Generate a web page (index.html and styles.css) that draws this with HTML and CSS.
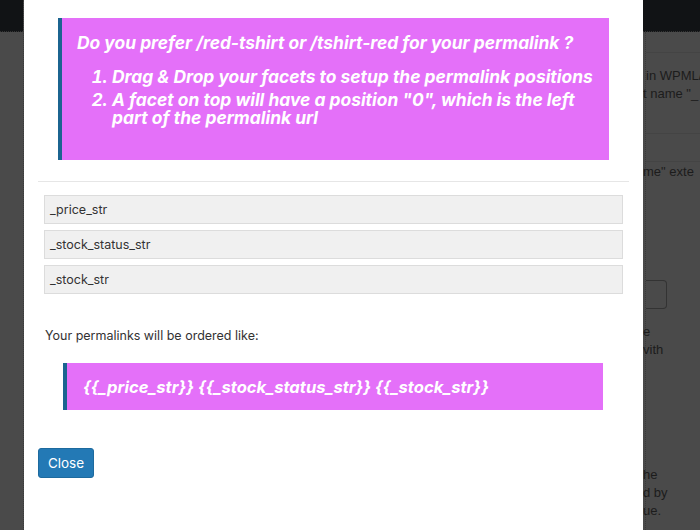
FILE: index.html
```html
<!DOCTYPE html>
<html lang="en">
<head>
  <meta charset="UTF-8" />
  <meta name="viewport" content="width=device-width, initial-scale=1" />
  <title>Permalink order</title>
  <link rel="stylesheet" href="styles.css">
</head>
<body>
<div class="screen">
  <aside class="edge edge-left">
    <div class="adminbar"></div>
  </aside>

  <main class="modal" role="dialog" aria-label="Permalink order">
    <div class="notice notice-help">
      <p class="notice-title">Do you prefer /red-tshirt or /tshirt-red for your permalink ?</p>
      <ol>
        <li>Drag &amp; Drop your facets to setup the permalink positions</li>
        <li>A facet on top will have a position "0", which is the left<br>part of the permalink url</li>
      </ol>
    </div>

    <hr class="sep">

    <div class="modal-body">
      <ul class="facets">
        <li>_price_str</li>
        <li>_stock_status_str</li>
        <li>_stock_str</li>
      </ul>
      <p class="order-label">Your permalinks will be ordered like:</p>
    </div>

    <div class="notice notice-result">{{_price_str}} {{_stock_status_str}} {{_stock_str}}</div>

    <button class="btn-close" type="button">Close</button>
  </main>

  <aside class="edge edge-right">
    <div class="adminbar"></div>
    <div class="page">
      <div class="page-box">
        <span class="clip">in WPML/</span>
        <span class="clip cut">t name "_</span>
      </div>
      <div class="page-row">
        <span class="clip cut">me" exte</span>
      </div>
      <div class="page-input"></div>
      <span class="clip cut line-e">e</span>
      <span class="clip cut">vith</span>
      <span class="clip cut line-he">he</span>
      <span class="clip cut">d by</span>
      <span class="clip cut">ue.</span>
    </div>
  </aside>
</div>
</body>
</html>
```

FILE: styles.css
```css
body {
  margin: 0;
  background: #4a4a4a;
  font-family: Inter, 'Liberation Sans', sans-serif;
  color: #333;
}
.screen {
  display: grid;
  grid-template-columns: 24px 619px 57px;
  width: 700px;
  height: 530px;
  overflow: hidden;
}

/* dimmed page behind the dialog */
.edge {
  background: #4a4a4a;
  overflow: hidden;
}
.edge-left {
  border-right: 1px dotted #3a3a3a;
  box-sizing: border-box;
}
.adminbar {
  height: 31px;
  background: #111315;
  border-bottom: 1px dotted #333;
}
.page {
  display: flex;
  flex-direction: column;
  font-family: 'Liberation Sans', sans-serif;
  font-size: 13px;
  line-height: 18px;
  color: #1c1c1c;
  border-left: 1px dotted #3a3a3a;
  margin-left: 2px;
  height: 100%;
}
.clip {
  white-space: nowrap;
  display: block;
}
.cut {
  margin-left: -3px;
}
.page-box {
  margin-top: 20px;
  height: 82px;
  padding-top: 14px;
  box-sizing: border-box;
  border-top: 1px solid #444;
  border-bottom: 1px solid #444;
}
.page-row {
  margin-top: 27px;
  border-top: 1px solid #444;
  padding-top: 1px;
}
.page-input {
  margin-top: 99px;
  width: 20px;
  height: 27px;
  border: 1px solid #333;
  border-left: none;
  border-radius: 0 4px 4px 0;
}
.line-e {
  margin-top: 14px;
}
.line-he {
  margin-top: 107px;
}

/* dialog */
.modal {
  background: #fff;
  padding: 0 14px;
}
.notice {
  background: #e470f9;
  border-left: 4px solid #1b6490;
  color: #fff;
  font-weight: 700;
  font-style: italic;
}
.notice-help {
  margin: 18px 20px 0;
  padding: 14px 15px 33px;
  font-size: 17.4px;
}
.notice-title {
  margin: 0;
  line-height: 22px;
}
.notice-help ol {
  margin: 14px 0 0;
  padding-left: 35px;
  line-height: 18px;
}
.notice-help li + li {
  margin-top: 5px;
}
.sep {
  margin: 21px 0 0;
  border: none;
  border-top: 1px solid #e6e6e6;
}
.modal-body {
  padding: 0 6px;
  font-size: 12.5px;
}
.facets {
  list-style: none;
  margin: 13px 0 0;
  padding: 0;
  display: flex;
  flex-direction: column;
  gap: 6px;
}
.facets li {
  height: 29px;
  box-sizing: border-box;
  background: #f0f0f0;
  border: 1px solid #dcdcdc;
  padding-left: 5px;
  line-height: 27px;
}
.order-label {
  margin: 33px 0 0 1px;
  line-height: 18px;
}
.notice-result {
  margin: 18px 0 0 25px;
  width: 520px;
  padding: 13px 0 12px 16px;
  font-size: 16.6px;
  line-height: 22px;
}
.btn-close {
  margin-top: 38px;
  width: 56px;
  height: 30px;
  background: #2379b5;
  border: 1px solid #1d6a9e;
  border-radius: 3px;
  color: #fff;
  font-family: Inter, 'Liberation Sans', sans-serif;
  font-size: 13.5px;
  padding: 0;
  cursor: pointer;
}
```
